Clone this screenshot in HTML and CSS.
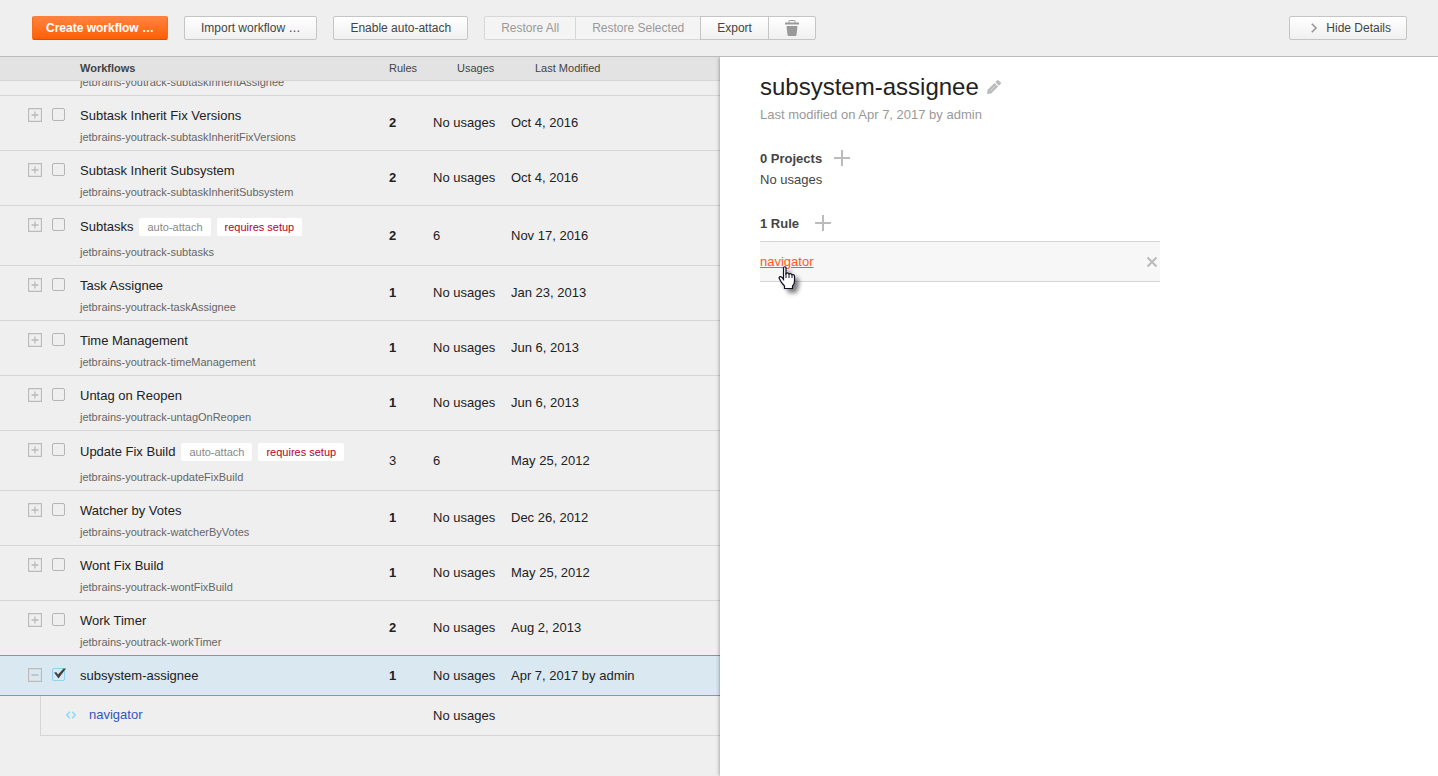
FILE: index.html
```
<!DOCTYPE html>
<html lang="en">
<head>
<meta charset="utf-8">
<title>Workflows</title>
<link rel="stylesheet" href="styles.css">
</head>
<body>
<svg class="sprite" aria-hidden="true">
  <symbol id="expand" viewBox="0 0 14 14"><path d="M.5.5h13v13H.5zM3.500 7h7M7 3.500v7" fill="none" stroke="currentColor" stroke-width="1.300"/></symbol>
  <symbol id="collapse" viewBox="0 0 14 14"><path d="M.5.5h13v13H.5zM3.500 7h7" fill="none" stroke="currentColor" stroke-width="1.300"/></symbol>
  <symbol id="plus" viewBox="0 0 16 16"><path d="M0 8h16M8 0v16" fill="none" stroke="currentColor" stroke-width="2"/></symbol>
</svg>
<header class="toolbar">
  <button class="btn primary">Create workflow …</button>
  <button class="btn">Import workflow …</button>
  <button class="btn">Enable auto-attach</button>
  <div class="group">
    <button class="btn" disabled>Restore All</button>
    <button class="btn" disabled>Restore Selected</button>
    <button class="btn">Export</button>
    <button class="btn" aria-label="Delete"><svg class="trash" viewBox="0 0 14 16"><path d="M4 3V1.500Q4 .5 5 .5h4q1 0 1 1V3" fill="none" stroke="#999"/><path d="M0 2.500h14v2H0zM1.500 6h11l-1 9q-.1 1-1.200 1H3.700q-1.100 0-1.200-1z" fill="#999"/></svg></button>
  </div>
  <button class="btn details-toggle"><svg class="chevron" viewBox="0 0 6 10"><path d="M.8.8 5 5 .8 9.200" fill="none" stroke="#999" stroke-width="1.600"/></svg>Hide Details</button>
</header>
<main class="content">
  <section class="list">
    <table>
      <colgroup><col class="c-indent"><col class="c-check"><col><col class="c-rules"><col class="c-usages"><col class="c-date"></colgroup>
      <thead>
        <tr><th colspan="2"></th><th class="main">Workflows</th><th>Rules</th><th class="h-usages">Usages</th><th class="h-date">Last Modified</th></tr>
      </thead>
      <tbody>
        <tr class="cut"><td colspan="2"></td><td><div class="clip"><small>jetbrains-youtrack-subtaskInheritAssignee</small></div></td><td></td><td></td><td></td></tr>
        <tr><td colspan="2"><div class="tools"><button class="exp" aria-label="Expand"><svg><use href="#expand"/></svg></button><input type="checkbox" aria-label="Subtask Inherit Fix Versions"></div></td><td class="name"><div class="title">Subtask Inherit Fix Versions</div><small>jetbrains-youtrack-subtaskInheritFixVersions</small></td><td><b>2</b></td><td>No usages</td><td>Oct 4, 2016</td></tr>
        <tr><td colspan="2"><div class="tools"><button class="exp" aria-label="Expand"><svg><use href="#expand"/></svg></button><input type="checkbox" aria-label="Subtask Inherit Subsystem"></div></td><td class="name"><div class="title">Subtask Inherit Subsystem</div><small>jetbrains-youtrack-subtaskInheritSubsystem</small></td><td><b>2</b></td><td>No usages</td><td>Oct 4, 2016</td></tr>
        <tr><td colspan="2"><div class="tools"><button class="exp" aria-label="Expand"><svg><use href="#expand"/></svg></button><input type="checkbox" aria-label="Subtasks"></div></td><td class="name"><div class="title tagged">Subtasks<span class="tag">auto-attach</span><span class="tag alert">requires setup</span></div><small>jetbrains-youtrack-subtasks</small></td><td><b>2</b></td><td>6</td><td>Nov 17, 2016</td></tr>
        <tr><td colspan="2"><div class="tools"><button class="exp" aria-label="Expand"><svg><use href="#expand"/></svg></button><input type="checkbox" aria-label="Task Assignee"></div></td><td class="name"><div class="title">Task Assignee</div><small>jetbrains-youtrack-taskAssignee</small></td><td><b>1</b></td><td>No usages</td><td>Jan 23, 2013</td></tr>
        <tr><td colspan="2"><div class="tools"><button class="exp" aria-label="Expand"><svg><use href="#expand"/></svg></button><input type="checkbox" aria-label="Time Management"></div></td><td class="name"><div class="title">Time Management</div><small>jetbrains-youtrack-timeManagement</small></td><td><b>1</b></td><td>No usages</td><td>Jun 6, 2013</td></tr>
        <tr><td colspan="2"><div class="tools"><button class="exp" aria-label="Expand"><svg><use href="#expand"/></svg></button><input type="checkbox" aria-label="Untag on Reopen"></div></td><td class="name"><div class="title">Untag on Reopen</div><small>jetbrains-youtrack-untagOnReopen</small></td><td><b>1</b></td><td>No usages</td><td>Jun 6, 2013</td></tr>
        <tr><td colspan="2"><div class="tools"><button class="exp" aria-label="Expand"><svg><use href="#expand"/></svg></button><input type="checkbox" aria-label="Update Fix Build"></div></td><td class="name"><div class="title tagged">Update Fix Build<span class="tag">auto-attach</span><span class="tag alert">requires setup</span></div><small>jetbrains-youtrack-updateFixBuild</small></td><td>3</td><td>6</td><td>May 25, 2012</td></tr>
        <tr><td colspan="2"><div class="tools"><button class="exp" aria-label="Expand"><svg><use href="#expand"/></svg></button><input type="checkbox" aria-label="Watcher by Votes"></div></td><td class="name"><div class="title">Watcher by Votes</div><small>jetbrains-youtrack-watcherByVotes</small></td><td><b>1</b></td><td>No usages</td><td>Dec 26, 2012</td></tr>
        <tr><td colspan="2"><div class="tools"><button class="exp" aria-label="Expand"><svg><use href="#expand"/></svg></button><input type="checkbox" aria-label="Wont Fix Build"></div></td><td class="name"><div class="title">Wont Fix Build</div><small>jetbrains-youtrack-wontFixBuild</small></td><td><b>1</b></td><td>No usages</td><td>May 25, 2012</td></tr>
        <tr class="before-selected"><td colspan="2"><div class="tools"><button class="exp" aria-label="Expand"><svg><use href="#expand"/></svg></button><input type="checkbox" aria-label="Work Timer"></div></td><td class="name"><div class="title">Work Timer</div><small>jetbrains-youtrack-workTimer</small></td><td><b>2</b></td><td>No usages</td><td>Aug 2, 2013</td></tr>
        <tr class="selected"><td colspan="2"><div class="tools"><button class="exp" aria-label="Collapse"><svg><use href="#collapse"/></svg></button><span class="check"><input type="checkbox" aria-label="subsystem-assignee" checked><svg class="tick" viewBox="0 0 14 11"><path d="M2 4.500 4.500 4.300 6 6.500 11.500.5H14L6.500 10.500z" fill="#444"/></svg></span></div></td><td class="name"><div class="title">subsystem-assignee</div></td><td><b>1</b></td><td>No usages</td><td>Apr 7, 2017 by admin</td></tr>
        <tr class="child"><td class="indent"></td><td colspan="2" class="branch"><div class="rule"><svg class="code" viewBox="0 0 10 8"><path d="M3.800.8.900 4l2.900 3.200M6.200.8 9.100 4 6.200 7.200" fill="none" stroke="#8fdaf8" stroke-width="1.600"/></svg><a href="#">navigator</a></div></td><td></td><td>No usages</td><td></td></tr>
      </tbody>
    </table>
  </section>
  <aside class="details">
    <h1>subsystem-assignee<button class="icon" aria-label="Rename"><svg class="pencil" viewBox="0 0 14 14"><path d="M0 14 .6 9.800 7.500 2.900 11.100 6.500 4.200 13.400zM8.300 2.100 10 .4q.9-.8 1.700 0l1.900 1.900q.8.8 0 1.700L11.900 5.700z" fill="#bbb"/><path d="m3.300 10.700 5-5" stroke="#e6e6e6" stroke-width=".7"/></svg></button></h1>
    <p class="modified">Last modified on Apr 7, 2017 by admin</p>
    <h2>0 Projects<button class="icon add" aria-label="Add project"><svg class="plus"><use href="#plus"/></svg></button></h2>
    <p class="none">No usages</p>
    <h2>1 Rule<button class="icon add wide" aria-label="Add rule"><svg class="plus"><use href="#plus"/></svg></button></h2>
    <div class="rule-item">
      <a href="#">navigator</a>
      <svg class="hand" viewBox="0 0 26 30"><path d="M6.500 1.500q1.500-1.500 2.500 0v6q1.500-1.500 3 .5 1.500-1 3 .8 2-.6 2.500 1.200V15q0 3-2 5v2.500H7.500V20Q4 16.500 2 12q.5-2.500 3-.5l1.500 2z" fill="#fff" stroke="#112" stroke-width="1.200"/><path d="M9 7v5M12 8v4M15 9v3" stroke="#112"/></svg>
      <button class="icon" aria-label="Remove"><svg class="cross" viewBox="0 0 10 10"><path d="m.5.5 9 9M9.500.5l-9 9" stroke="#bbb" stroke-width="2"/></svg></button>
    </div>
  </aside>
</main>
</body>
</html>
```
FILE: styles.css
```
* { box-sizing: border-box; }
body {
  margin: 0;
  min-height: 100vh;
  display: flex;
  flex-direction: column;
  background: #efefef;
  color: #222;
  font: 13px/20px "Liberation Sans", Arial, sans-serif;
}
button { font: inherit; color: inherit; cursor: pointer; }
svg { display: block; flex: none; }
h1, h2, p { margin: 0; }
.sprite { position: absolute; width: 0; height: 0; }

.toolbar {
  display: flex;
  align-items: center;
  gap: 16px;
  padding: 16px 31px 16px 32px;
  border-bottom: 1px solid #bbb;
}
.btn {
  display: flex;
  align-items: center;
  height: 24px;
  padding: 0 15px;
  border: 1px solid #c5c5c5;
  border-radius: 2px;
  background: linear-gradient(#fff, #f0f0f0);
  color: #444;
  font-size: 12px;
  white-space: nowrap;
}
.toolbar .btn { padding: 0 16px; }
.toolbar .primary {
  padding: 0 13px;
  border-color: #ff7f3c #ff6a1a #d95204;
  background: linear-gradient(#ff8340, #ff5f05);
  color: #fff;
  font-weight: bold;
}
.group { display: flex; }
.group .btn { border-radius: 0; margin-left: -1px; }
.group .btn:first-child { border-radius: 2px 0 0 2px; margin-left: 0; }
.group .btn:last-child { border-radius: 0 2px 2px 0; }
.btn:disabled { border-color: #d7d7d7; background: #f4f4f4; color: #999; }
.trash { width: 14px; height: 16px; }
.toolbar .details-toggle { margin-left: auto; padding: 0 15px 0 20px; gap: 8px; }
.chevron { width: 8px; height: 10px; }

.content { flex: 1; display: flex; }
.list { width: calc(50% + 1px); }
table { width: 100%; table-layout: fixed; border-collapse: separate; border-spacing: 0; }
.c-indent, .c-check { width: 40px; }
.c-rules { width: 44px; }
.c-usages { width: 78px; }
.c-date { width: 209px; }
th {
  height: 24px;
  padding: 0 0 2px;
  border-bottom: 1px solid #d6d6d6;
  background: #e3e3e3;
  color: #444;
  font-size: 11px;
  font-weight: normal;
  line-height: 16px;
  text-align: left;
}
.main { font-weight: bold; }
.h-usages, .h-date { padding-left: 24px; }
td { height: 40px; padding: 0; border-bottom: 1px solid #d6d6d6; }
td:first-child, .name { vertical-align: top; }
.cut td { height: 15px; }
.clip {
  display: flex;
  flex-direction: column;
  justify-content: flex-end;
  height: 14px;
  padding-bottom: 3px;
  overflow: hidden;
}
.tools { display: flex; gap: 10px; padding: 12px 0 0 28px; }
.exp { padding: 0; border: 0; background: none; color: #bbb; }
.exp svg { width: 14px; height: 14px; }
input[type="checkbox"] {
  appearance: none;
  display: block;
  width: 13px;
  height: 13px;
  margin: 0;
  border: 1px solid #b5b5b5;
  border-radius: 2px;
}
input[type="checkbox"]:checked { border-color: #8fd3f3; }
.check { position: relative; }
.tick { position: absolute; top: 0; left: 0; width: 14px; height: 11px; pointer-events: none; }
.name { padding: 8px 0 3px; }
.title { display: flex; align-items: center; line-height: 24px; }
small { display: block; color: #666; font-size: 11px; line-height: 19px; }
.tagged { padding-bottom: 4px; line-height: 25px; }
.tag {
  margin-left: 6px;
  padding: 0 8px;
  border-radius: 2px;
  background: #fff;
  color: #888;
  font-size: 11px;
  line-height: 18px;
}
.alert { color: #b8001f; }
.before-selected td, .selected td { border-bottom-color: #2cb4f5; }
.selected td { background: #dae8f1; }
.child .indent { border-bottom: 0; }
.branch { border-left: 1px solid #d6d6d6; }
.rule { display: flex; align-items: center; gap: 13px; padding: 0 0 2px 25px; }
.code { width: 10px; height: 8px; }
.rule a { color: #35b; text-decoration: none; }

.details {
  position: relative;
  flex: 1;
  padding: 16px 40px;
  background: #fff;
  box-shadow: 0 0 4px rgba(0, 0, 0, .45);
  clip-path: inset(0 0 0 -8px);
}
h1 { display: flex; align-items: center; gap: 8px; font-size: 24px; font-weight: normal; line-height: 28px; }
h2 { display: flex; align-items: center; gap: 12px; height: 20px; margin-top: 24px; color: #444; font-size: 13px; line-height: 20px; }
.icon { padding: 0; border: 0; background: none; color: #bbb; }
.pencil { width: 14px; height: 14px; }
.plus { width: 16px; height: 16px; }
.add { padding-bottom: 3px; }
.wide { margin-left: 4px; }
.modified { margin-top: 4px; color: #999; }
.none { margin-top: 1px; color: #444; }
.rule-item {
  position: relative;
  display: flex;
  align-items: center;
  justify-content: space-between;
  max-width: 400px;
  height: 41px;
  margin-top: 7px;
  padding-right: 3px;
  border: solid #d6d6d6;
  border-width: 1px 0;
  background: #f7f7f7;
}
.rule-item a { color: #ff5a1a; }
.hand { position: absolute; top: 24px; left: 17px; width: 26px; height: 30px; filter: drop-shadow(4px 4px 2px rgba(0, 0, 0, .5)); }
.cross { width: 10px; height: 10px; }
```
